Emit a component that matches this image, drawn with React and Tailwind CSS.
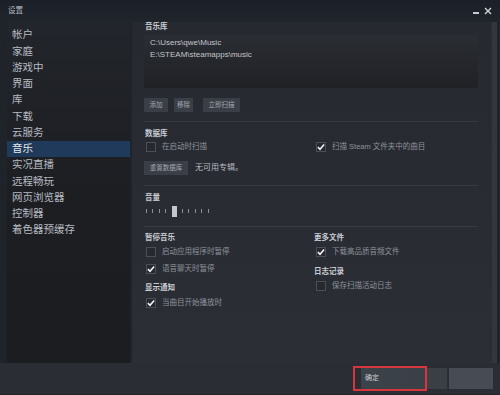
import React from "react";

const navItems = [
  "帐户",
  "家庭",
  "游戏中",
  "界面",
  "库",
  "下载",
  "云服务",
  "音乐",
  "实况直播",
  "远程畅玩",
  "网页浏览器",
  "控制器",
  "着色器预缓存",
];

function Checkbox({ checked, label, className = "" }) {
  return (
    <div className={`flex items-center h-[10px] ${className}`}>
      <div className="w-[10px] h-[10px] border border-[#4b4f57] bg-[#26292f] flex items-center justify-center ml-[2px]">
        {checked && (
          <svg width="9" height="8" viewBox="0 0 9 8">
            <polyline
              points="1,4.2 3.4,6.6 8,1.2"
              fill="none"
              stroke="#f2f3f5"
              strokeWidth="1.8"
            />
          </svg>
        )}
      </div>
      <span className="ml-[6px] text-[7.5px] leading-[10px] text-[#8e939a]">{label}</span>
    </div>
  );
}

function Heading({ children, className = "" }) {
  return (
    <div className={`text-[7.5px] leading-[9px] font-bold text-[#c9cdd3] ${className}`}>
      {children}
    </div>
  );
}

function SmallButton({ children, className = "" }) {
  return (
    <div
      className={`h-[14px] flex items-center justify-center bg-[#3a3e46] text-[6.5px] text-[#a3a8af] ${className}`}
    >
      {children}
    </div>
  );
}

export default function App() {
  return (
    <div
      className="w-[500px] h-[395px] flex flex-col bg-[#1f232a] overflow-hidden"
      style={{ fontFamily: '"Liberation Sans", "Noto Sans CJK SC", sans-serif' }}
    >
      {/* Title bar */}
      <div className="h-[22px] flex items-center justify-between pl-[8px] pr-[8px] bg-gradient-to-b from-[#1b1f27] to-[#20242b]">
        <span className="text-[7.5px] text-[#b9bdc3]">设置</span>
        <div className="flex items-center gap-[5px] text-[#c8ccd2]">
          <div className="w-[6px] h-[1.5px] bg-[#c8ccd2] mt-[4px]" />
          <svg width="8" height="8" viewBox="0 0 8 8">
            <path d="M1 1 L7 7 M7 1 L1 7" stroke="#d0d3d8" strokeWidth="1.4" />
          </svg>
        </div>
      </div>

      {/* Body */}
      <div className="h-[341px] flex pl-[7px]">
        {/* Sidebar */}
        <div className="w-[123px] bg-gradient-to-b from-[#22252b] via-[#1c1e22] to-[#1b1d21] pt-[5px]">
          {navItems.map((item) => (
            <div
              key={item}
              className={`h-[16.25px] flex items-center pl-[5px] text-[10.5px] ${
                item === "音乐" ? "bg-[#1f3a5a] text-[#e6e9ec]" : "text-[#b7bbc1]"
              }`}
            >
              {item}
            </div>
          ))}
        </div>

        {/* Main panel */}
        <div className="w-[359px] ml-[2px] bg-gradient-to-b from-[#262930] to-[#2b2e35] pl-[12px] pr-[13px]">
          <Heading className="ml-[1px]">音乐库</Heading>
          <div className="mt-[4px] h-[53px] bg-gradient-to-b from-[#2a2d33] to-[#1f2125] pl-[6px] pt-[2px] text-[8px] leading-[11.5px] text-[#c3c6cb]">
            <div>C:\Users\qwe\Music</div>
            <div>E:\STEAM\steamapps\music</div>
          </div>

          <div className="mt-[10px] flex">
            <SmallButton className="w-[24px]">添加</SmallButton>
            <SmallButton className="w-[19px] ml-[6px]">移除</SmallButton>
            <SmallButton className="w-[37px] ml-[10px]">立即扫描</SmallButton>
          </div>

          <div className="mt-[9px] h-px bg-[#373a41]" />

          <Heading className="mt-[7px] ml-[1px]">数据库</Heading>
          <div className="mt-[4px] grid grid-cols-[170px_1fr]">
            <Checkbox label="在启动时扫描" />
            <Checkbox checked label="扫描 Steam 文件夹中的曲目" />
          </div>
          <div className="mt-[9px] flex items-center">
            <div className="w-[44px] h-[13.5px] flex items-center justify-center bg-[#3a3e46] text-[6.5px] text-[#a3a8af]">
              重置数据库
            </div>
            <span className="ml-[7px] text-[8px] text-[#b7bbc1]">无可用专辑。</span>
          </div>

          <div className="mt-[10px] h-px bg-[#373a41]" />

          <Heading className="mt-[7px] ml-[1px]">音量</Heading>
          <div className="mt-[4px] h-[11px] flex items-center pl-[2px] gap-[5.4px]">
            {[0, 1, 2, 3].map((i) => (
              <div key={i} className="w-px h-[4px] bg-[#8a8f96]" />
            ))}
            <div className="w-[5px] h-[11px] bg-[#c3c6cb]" />
            {[0, 1, 2, 3, 4].map((i) => (
              <div key={i} className="w-px h-[4px] bg-[#8a8f96]" />
            ))}
          </div>

          <div className="mt-[9.5px] h-px bg-[#373a41]" />

          <div className="mt-[6px] grid grid-cols-[170px_1fr]">
            <div>
              <Heading className="ml-[1px]">暂停音乐</Heading>
              <Checkbox className="mt-[4.5px]" label="启动应用程序时暂停" />
              <Checkbox className="mt-[7px]" checked label="语音聊天时暂停" />
              <Heading className="mt-[9.5px] ml-[1px]">显示通知</Heading>
              <Checkbox className="mt-[6px]" checked label="当曲目开始播放时" />
            </div>
            <div>
              <Heading>更多文件</Heading>
              <Checkbox className="mt-[4.5px]" checked label="下载高品质音频文件" />
              <Heading className="mt-[10px]">日志记录</Heading>
              <Checkbox className="mt-[5.5px]" label="保存扫描活动日志" />
            </div>
          </div>
        </div>

        {/* Scrollbar strip */}
        <div className="w-[6px] bg-[#33363c] border-l border-[#2a2d33]" />
      </div>

      {/* Bottom bar */}
      <div className="h-[32px] bg-[#2a2d33] flex justify-end pt-[5px] pr-[7px] border-b border-[#222429]">
        <div className="relative flex h-[21px]">
          <div className="w-[86px] h-[21px] flex items-center pl-[4px] bg-gradient-to-r from-[#3c4249] to-[#3a3f46] text-[7px] text-[#c8ccd2]">
            确定
          </div>
          <div className="w-[44px] h-[21px] ml-[2px] bg-[#474c54]" />
          <div className="absolute left-[-8px] top-[-2px] w-[74px] h-[25px] border-2 border-[#d8363d]" />
        </div>
      </div>
    </div>
  );
}
